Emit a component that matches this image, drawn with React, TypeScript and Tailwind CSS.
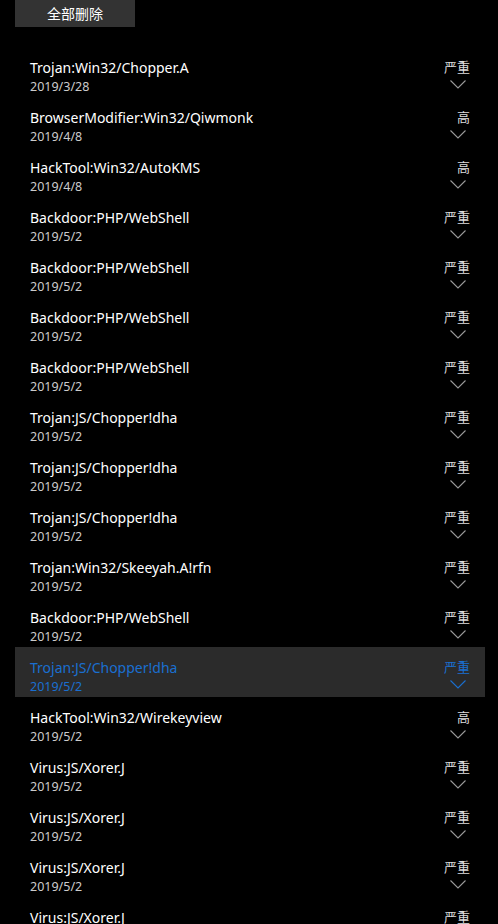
import { useState } from 'react'

interface Threat {
  name: string
  date: string
  level: string
}

const threats: Threat[] = [
  { name: 'Trojan:Win32/Chopper.A', date: '2019/3/28', level: '严重' },
  { name: 'BrowserModifier:Win32/Qiwmonk', date: '2019/4/8', level: '高' },
  { name: 'HackTool:Win32/AutoKMS', date: '2019/4/8', level: '高' },
  { name: 'Backdoor:PHP/WebShell', date: '2019/5/2', level: '严重' },
  { name: 'Backdoor:PHP/WebShell', date: '2019/5/2', level: '严重' },
  { name: 'Backdoor:PHP/WebShell', date: '2019/5/2', level: '严重' },
  { name: 'Backdoor:PHP/WebShell', date: '2019/5/2', level: '严重' },
  { name: 'Trojan:JS/Chopper!dha', date: '2019/5/2', level: '严重' },
  { name: 'Trojan:JS/Chopper!dha', date: '2019/5/2', level: '严重' },
  { name: 'Trojan:JS/Chopper!dha', date: '2019/5/2', level: '严重' },
  { name: 'Trojan:Win32/Skeeyah.A!rfn', date: '2019/5/2', level: '严重' },
  { name: 'Backdoor:PHP/WebShell', date: '2019/5/2', level: '严重' },
  { name: 'Trojan:JS/Chopper!dha', date: '2019/5/2', level: '严重' },
  { name: 'HackTool:Win32/Wirekeyview', date: '2019/5/2', level: '高' },
  { name: 'Virus:JS/Xorer.J', date: '2019/5/2', level: '严重' },
  { name: 'Virus:JS/Xorer.J', date: '2019/5/2', level: '严重' },
  { name: 'Virus:JS/Xorer.J', date: '2019/5/2', level: '严重' },
  { name: 'Virus:JS/Xorer.J', date: '2019/5/2', level: '严重' },
]

function Chevron({ color }: { color: string }) {
  return (
    <svg width="16" height="9" viewBox="0 0 16 9" fill="none" className="mr-[4px]">
      <path d="M0.5 0.5 L8 8 L15.5 0.5" stroke={color} strokeWidth="1.1" />
    </svg>
  )
}

export default function App() {
  const [selected, setSelected] = useState(12)

  return (
    <div
      className="w-[498px] h-[924px] overflow-hidden bg-black text-white"
      style={{ fontFamily: '"Noto Sans", "Noto Sans CJK SC", sans-serif' }}
    >
      <button className="ml-[15px] w-[120px] h-[27px] bg-[#333333] text-[14px] leading-[27px] text-white">
        全部删除
      </button>

      <div className="mt-[20px] pl-[15px] pr-[13px]">
        {threats.map((t, i) => {
          const active = i === selected
          return (
            <div
              key={i}
              onClick={() => setSelected(i)}
              className={`h-[50px] flex justify-between pl-[15px] pr-[15px] pt-[11px] ${active ? 'bg-[#2b2b2b]' : ''}`}
            >
              <div className="flex flex-col">
                <span className={`text-[14px] leading-[20px] ${active ? 'text-[#1a6fd0]' : 'text-white'}`}>
                  {t.name}
                </span>
                <span className={`text-[12.5px] leading-[18px] ${active ? 'text-[#1a6fd0]' : 'text-[#cccccc]'}`}>
                  {t.date}
                </span>
              </div>
              <div className="flex flex-col items-end">
                <span className={`text-[13px] leading-[18px] ${active ? 'text-[#1a6fd0]' : 'text-[#dddddd]'}`}>
                  {t.level}
                </span>
                <div className="mt-[4px]">
                  <Chevron color={active ? '#1a6fd0' : '#9a9a9a'} />
                </div>
              </div>
            </div>
          )
        })}
      </div>
    </div>
  )
}
